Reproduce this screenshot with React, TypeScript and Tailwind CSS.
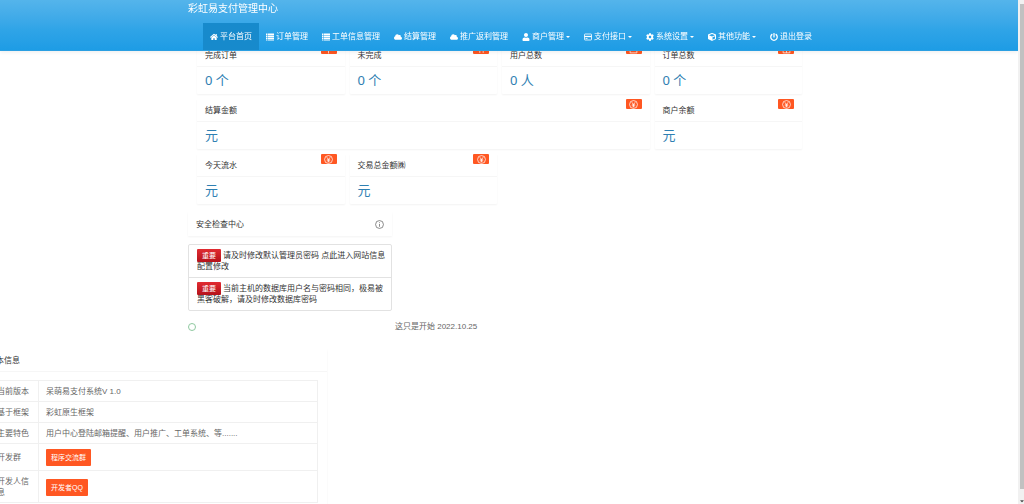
import type { ReactNode } from "react";
import type { IconType } from "react-icons";
import { FaCaretDown, FaCloud, FaCog, FaCube, FaHome, FaPowerOff, FaUser } from "react-icons/fa";

type IconProps = { className?: string };

function ListIcon({ className }: IconProps) {
  return (
    <svg viewBox="0 0 16 16" className={className} fill="currentColor">
      <path d="M0 1h3v3H0zM4 1h12v3H4zM0 5h3v3H0zM4 5h12v3H4zM0 9h3v3H0zM4 9h12v3H4zM0 13h3v2H0zM4 13h12v2H4z" />
    </svg>
  );
}

function CardIcon({ className }: IconProps) {
  return (
    <svg viewBox="0 0 16 16" className={className} fill="none" stroke="currentColor" strokeWidth="1.6">
      <rect x="1" y="2" width="14" height="12" rx="1" />
      <path d="M1 7h14" strokeWidth="2.6" />
      <path d="M3 11h4" />
    </svg>
  );
}

type NavItem = {
  label: string;
  icon: IconType | ((props: IconProps) => ReactNode);
  active?: boolean;
  dropdown?: boolean;
};

const navItems: NavItem[] = [
  { label: "平台首页", icon: FaHome, active: true },
  { label: "订单管理", icon: ListIcon },
  { label: "工单信息管理", icon: ListIcon },
  { label: "结算管理", icon: FaCloud },
  { label: "推广返利管理", icon: FaCloud },
  { label: "商户管理", icon: FaUser, dropdown: true },
  { label: "支付接口", icon: CardIcon, dropdown: true },
  { label: "系统设置", icon: FaCog, dropdown: true },
  { label: "其他功能", icon: FaCube, dropdown: true },
  { label: "退出登录", icon: FaPowerOff },
];

type IconName = "flag" | "chart" | "user" | "table" | "yen";

const stats: { title: string; value: string; icon: IconName; wide?: boolean }[] = [
  { title: "完成订单", value: "0 个", icon: "flag" },
  { title: "未完成", value: "0 个", icon: "chart" },
  { title: "用户总数", value: "0 人", icon: "user" },
  { title: "订单总数", value: "0 个", icon: "table" },
  { title: "结算金额", value: "元", icon: "yen", wide: true },
  { title: "商户余额", value: "元", icon: "yen" },
  { title: "今天流水", value: "元", icon: "yen" },
  { title: "交易总金额㈱", value: "元", icon: "yen" },
];

const iconPaths: Record<IconName, string> = {
  flag: "M8 1v14M8 2h6v6H8",
  chart: "M5 14V7M11 14V7M5 7h6",
  user: "M2 14V9h12v5zM5 9V3h6v6",
  table: "M2 2h12v12H2zM2 8h12M8 2v12",
  yen: "M5 4l3 4 3-4M8 8v5M5 8.5h6M5 10.5h6",
};

function BadgeIcon({ name }: { name: IconName }) {
  return (
    <svg viewBox="0 0 16 16" className="size-[9px]" fill="none" stroke="currentColor" strokeWidth="1.3">
      {name === "yen" && <circle cx="8" cy="8" r="7" />}
      <path d={iconPaths[name]} />
    </svg>
  );
}

function Nav() {
  return (
    <header className="sticky top-0 z-10 h-[51px] border-b border-[#2b9fe2] bg-linear-to-b from-[#54b4eb] via-[#2fa4e7] via-60% to-[#1d9ce5] text-white shadow-[0_1px_4px_rgba(0,0,0,0.08)]">
      <div className="mx-auto w-full max-w-[642px]">
        <a href="#" className="block h-[23px] text-[10px] leading-[18px]">
          彩虹易支付管理中心
        </a>
        <nav className="flex pl-[15px] whitespace-nowrap">
          {navItems.map(({ label, icon: Icon, active, dropdown }) => (
            <a
              key={label}
              href="#"
              className={`flex h-[27px] items-center gap-[2px] px-[7px] ${active ? "bg-[#178acc]" : ""}`}
            >
              <Icon className="size-[8px] shrink-0" />
              <span>{label}</span>
              {dropdown && (
                <svg viewBox="0 0 4 2" className="h-[2px] w-[4px] shrink-0" fill="currentColor">
                  <path d="M0 0h4L2 2z" />
                </svg>
              )}
            </a>
          ))}
        </nav>
      </div>
    </header>
  );
}

function StatCard({ title, value, icon, wide }: (typeof stats)[number]) {
  return (
    <section className={`rounded-[1px] shadow-[0_1px_2px_0_rgba(0,0,0,0.05)] ${wide ? "col-span-3" : ""}`}>
      <div className="flex h-[23px] items-start justify-between border-b border-[#f6f6f6] px-[8px]">
        <h2 className="leading-[24px]">{title}</h2>
        <span className="flex h-[10px] w-[16px] items-center justify-center rounded-[1px] bg-[#ff5722] text-white">
          <BadgeIcon name={icon} />
        </span>
      </div>
      <p className="px-[8px] font-['Noto_Sans','Noto_Sans_CJK_SC',sans-serif] text-[13px] leading-[27px] text-[#2f80b2]">
        {value}
      </p>
    </section>
  );
}

function Notice({ children }: { children: ReactNode }) {
  return (
    <li className="border-b border-[#e2e2e2] py-[5px] pr-[4px] pl-[8px] leading-[11px] last:border-b-0">
      <span className="mr-[2px] rounded-[1px] bg-linear-to-b from-[#e12b31] to-[#b5121b] px-[5px] py-[3px] text-[7px] text-white">
        重要
      </span>
      <a href="#">{children}</a>
    </li>
  );
}

function Row({ label, children }: { label: string; children: ReactNode }) {
  return (
    <tr>
      <th scope="row" className="w-[50px] border border-[#f0f0f0] px-[8px] pt-[5px] pb-[4px] text-left font-normal">
        {label}
      </th>
      <td className="border border-[#f0f0f0] px-[7px] pt-[5px] pb-[4px]">{children}</td>
    </tr>
  );
}

function LinkButton({ children }: { children: ReactNode }) {
  return (
    <button type="button" className="block h-[17px] rounded-[1px] bg-[#ff5722] px-[5px] text-[7px] text-white">
      {children}
    </button>
  );
}

export default function App() {
  return (
    <div className="flex h-screen overflow-hidden bg-white font-['Liberation_Sans','Noto_Sans_CJK_SC',sans-serif] text-[8px] leading-[11px] text-[#333]">
      <div className="min-w-0 flex-1 overflow-hidden">
        <Nav />
        <main className="-mt-[7px]">
          <div className="mx-auto max-w-[642px]">
            <div className="grid grid-cols-4 gap-[5px] pr-[28px] pl-[9px]">
              {stats.map((stat) => (
                <StatCard key={stat.title} {...stat} />
              ))}
            </div>

            <section className="mt-[8px] w-[204px]">
              <div className="flex h-[24px] items-center justify-between px-[8px] shadow-[0_1px_2px_0_rgba(0,0,0,0.05)]">
                <h2>安全检查中心</h2>
                <svg viewBox="0 0 16 16" className="size-[9px]" fill="none" stroke="#555" strokeWidth="1.2">
                  <circle cx="8" cy="8" r="7" />
                  <path d="M8 4v1.5M8 7v5" />
                </svg>
              </div>
              <ul className="mt-[8px] rounded-[2px] border border-[#e2e2e2]">
                <Notice>请及时修改默认管理员密码 点此进入网站信息配置修改</Notice>
                <Notice>当前主机的数据库用户名与密码相同，极易被黑客破解，请及时修改数据库密码</Notice>
              </ul>
            </section>

            <footer className="mt-[10px] flex h-[11px] items-center text-[#666]">
              <span className="size-[8px] rounded-full border border-[#8fc9a0]" />
              <p className="flex-1 pl-[199px]">这只是开始 2022.10.25</p>
            </footer>
          </div>

          {/* slides partly past the left edge */}
          <section className="mt-[17px] -ml-[21px] w-[348px] text-[#666] shadow-[0_1px_2px_0_rgba(0,0,0,0.05)]">
            <h2 className="h-[23px] border-b border-[#f6f6f6] px-[9px] leading-[24px] text-[#333]">基本信息</h2>
            <div className="px-[9px] py-[8px]">
              <table className="w-full border-collapse">
                <tbody>
                  <Row label="当前版本">呆萌易支付系统V 1.0</Row>
                  <Row label="基于框架">彩虹原生框架</Row>
                  <Row label="主要特色">用户中心登陆邮箱提醒、用户推广、工单系统、等.......</Row>
                  <Row label="开发群">
                    <LinkButton>程序交流群</LinkButton>
                  </Row>
                  <Row label="开发人信息">
                    <LinkButton>开发者QQ</LinkButton>
                  </Row>
                </tbody>
              </table>
            </div>
          </section>
        </main>
      </div>

      {/* scrollbar */}
      <div aria-hidden className="flex w-[6px] flex-col border-l-2 border-[#f1f1f1] bg-[#f1f1f1]">
        <div className="h-[4px]" />
        <div className="flex-1 bg-[#c1c1c1]" />
        <div className="flex h-[15px] items-end justify-center">
          <FaCaretDown className="size-[6px] text-[#505050]" />
        </div>
      </div>
    </div>
  );
}
